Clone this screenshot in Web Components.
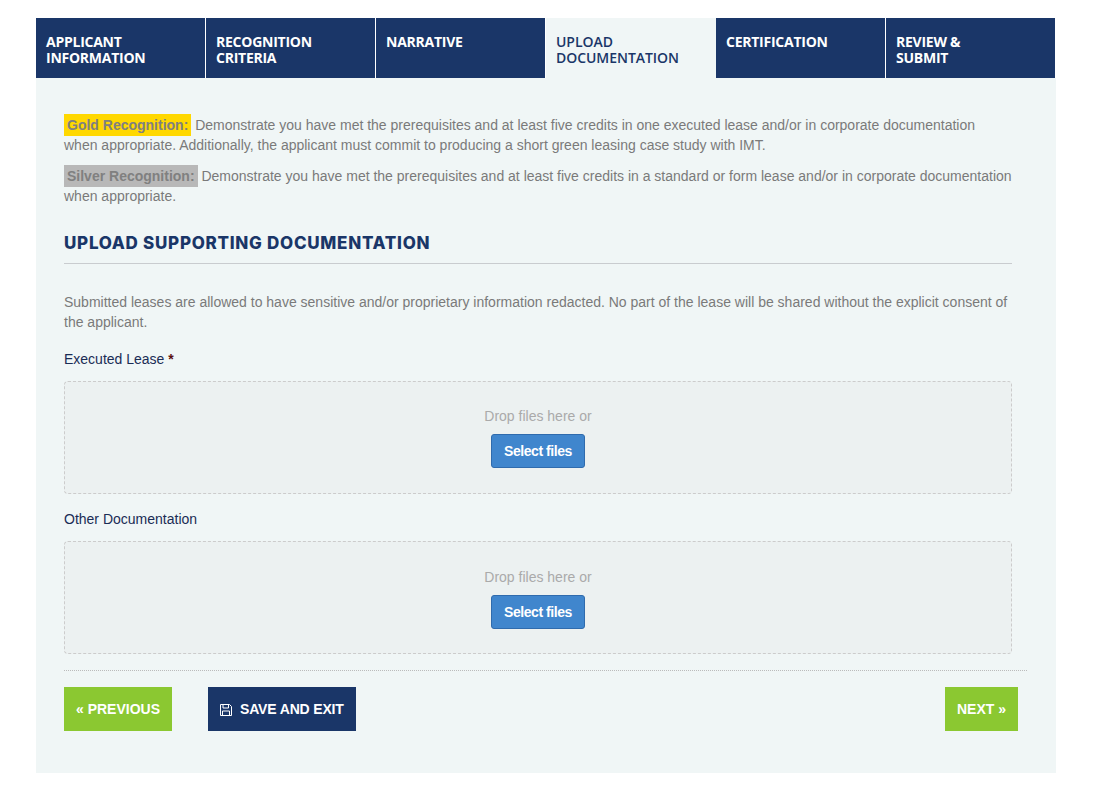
<!DOCTYPE html>
<html lang="en"><head><meta charset="utf-8"><title>Upload Documentation</title>
<style>
html,body{margin:0;background:#fff}
body{padding:18px 38px 23px 36px;font:14px/20px "Liberation Sans",Arial,sans-serif;color:#7a7a7a}
</style></head><body>
<app-form>
  <tab-bar slot="tabs">
    <form-tab>APPLICANT<br>INFORMATION</form-tab>
    <form-tab>RECOGNITION<br>CRITERIA</form-tab>
    <form-tab>NARRATIVE</form-tab>
    <form-tab active>UPLOAD<br>DOCUMENTATION</form-tab>
    <form-tab>CERTIFICATION</form-tab>
    <form-tab>REVIEW &amp;<br>SUBMIT</form-tab>
  </tab-bar>
  <tier-note tier="gold" label="Gold Recognition:">Demonstrate you have met the prerequisites and at least five credits in one executed lease and/or in corporate documentation when appropriate. Additionally, the applicant must commit to producing a short green leasing case study with IMT.</tier-note>
  <tier-note tier="silver" label="Silver Recognition:">Demonstrate you have met the prerequisites and at least five credits in a standard or form lease and/or in corporate documentation when appropriate.</tier-note>
  <section-title>UPLOAD SUPPORTING DOCUMENTATION</section-title>
  <intro-text>Submitted leases are allowed to have sensitive and/or proprietary information redacted. No part of the lease will be shared without the explicit consent of the applicant.</intro-text>
  <upload-field label="Executed Lease" required></upload-field>
  <upload-field label="Other Documentation"></upload-field>
  <form-footer>
    <nav-button kind="green" style="letter-spacing:0">« PREVIOUS</nav-button>
    <nav-button kind="navy" icon>SAVE AND EXIT</nav-button>
    <nav-button kind="green" slot="end" style="letter-spacing:0">NEXT »</nav-button>
  </form-footer>
</app-form>
<script>
function def(name, css, html){
  customElements.define(name, class extends HTMLElement{
    constructor(){super();const r=this.attachShadow({mode:'open'});
      r.innerHTML='<style>'+css+'</style>'+(typeof html==='function'?html(this):html);}
  });
}
def('app-form',
 ':host{display:block;width:1020px}.body{background:#f0f6f6;padding:37px 44px 42px 28px;}',
 '<slot name="tabs"></slot><div class="body"><slot></slot></div>');
def('tab-bar',
 ':host{display:grid;grid-template-columns:170px 170px 170px 170px 170px 169px;width:1019px;height:60px}',
 '<slot></slot>');
def('form-tab',
 ':host{display:block;box-sizing:border-box;height:60px;padding:16px 8px 0 10px;background:#1a3668;color:#fff;border-right:1px solid #fff;font:700 14px/16px "Open Sans",sans-serif;letter-spacing:-.25px}'+
 ':host(:last-child){border-right:0}:host([active]){background:#f0f6f6;color:#1a3668;font-weight:600;border-right:0;letter-spacing:-.05px}',
 '<slot></slot>');
def('tier-note',
 ':host{display:block;margin-bottom:11px;color:#7a7a7a}.l{font-weight:700;padding:3px;color:#808080}:host([tier=gold]) .l{background:#ffd800}:host([tier=silver]) .l{background:#b8b8b8}',
 h=>'<span class="l">'+h.getAttribute('label')+'</span> <slot></slot>');
def('section-title',
 ':host{display:block;margin-top:25px;padding-bottom:8px;border-bottom:1px solid #c9cccf;color:#1a3668;font:800 17px/24px Inter,sans-serif;letter-spacing:.72px}',
 '<slot></slot>');
def('intro-text',':host{display:block;margin-top:28px;color:#7a7a7a}','<slot></slot>');
def('upload-field',
 ':host{display:block;margin-top:17px}:host(:not([required])){margin-top:15px}:host(:not([required])) .zone{padding-top:25px}.lab{display:block;color:#1a2c55;line-height:20px;margin-bottom:12px}.req{color:#5a1010;font-weight:700}'+
 '.zone{box-sizing:border-box;height:113px;border:1px dashed #ccc;border-radius:4px;background:#ecf1f1;display:flex;flex-direction:column;align-items:center;padding-top:24px}'+
 '.t{color:#aaa;line-height:20px}button{box-sizing:border-box;width:94px;height:34px;margin-top:8px;background:#4086cd;border:1px solid #2f6bad;border-radius:3px;color:#fff;font:700 14px/20px "Liberation Sans",sans-serif;letter-spacing:-.45px;padding:0}',
 h=>'<span class="lab">'+h.getAttribute('label')+(h.hasAttribute('required')?' <span class="req">*</span>':'')+'</span><div class="zone"><span class="t">Drop files here or</span><button type="button">Select files</button></div>');
def('form-footer',
 ':host{display:flex;margin:16px -15px 0 0;padding:16px 9px 0 0;border-top:1px dotted #bbb;gap:36px}.end{margin-left:auto;display:block}',
 '<slot></slot><span class="end"><slot name="end"></slot></span>');
def('nav-button',
 ':host{display:block;box-sizing:border-box;height:44px;padding:0 12px;font:700 14px/44px "Liberation Sans",sans-serif;color:#fff;letter-spacing:-.16px;white-space:nowrap}'+
 ':host([kind=green]){background:#8bc831}:host([kind=navy]){background:#1a3668}svg{width:12px;height:12px;margin-right:8px;vertical-align:-1.5px}',
 h=>(h.hasAttribute('icon')?'<svg viewBox="0 0 12 12" fill="none" stroke="#fff" stroke-width="1"><path d="M.5.5h9l2 2v9H.5z"/><path d="M3 .5v3.5h5.500V.5M2.500 11.500V7h7v4.500"/></svg>':'')+'<slot></slot>');
</script>
</body></html>
